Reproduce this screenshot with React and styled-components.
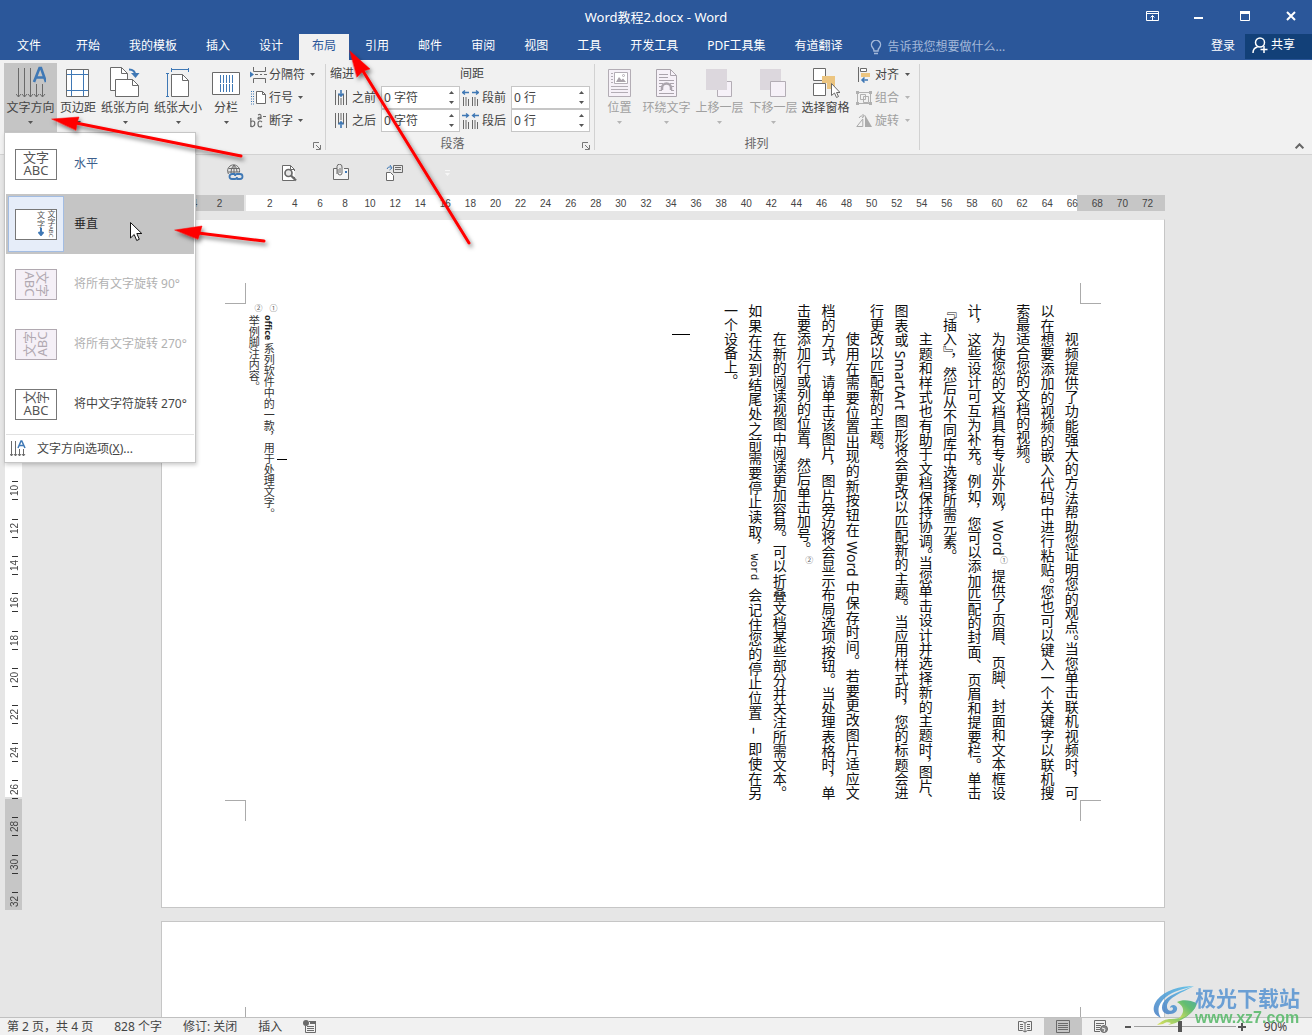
import React from "react";
import styled, { createGlobalStyle, css } from "styled-components";

const Global = createGlobalStyle`
  * { box-sizing: border-box; }
  body { margin: 0; background: #e6e6e6; }
  body, button, input { font-family: "Noto Sans", "Noto Sans CJK SC", sans-serif; font-size: 12px; line-height: 16px; color: #444; }
  button { border: 0; padding: 0; background: none; cursor: default; }
  svg { display: block; flex: none; }
`;

const Shell = styled.div`
  position: relative;
  display: flex;
  flex-direction: column;
  height: 100vh;
  min-height: 600px;
  overflow: hidden;
`;

/* ---------- title bar and tabs ---------- */
const TitleBar = styled.header`
  display: grid;
  grid-template-columns: 1fr auto 1fr;
  align-items: center;
  height: 34px;
  flex: none;
  background: #2b579a;
  color: #fff;
`;
const Title = styled.h1`
  margin: 0;
  grid-column: 2;
  font-size: 13px;
  font-weight: 400;
`;
const WindowButtons = styled.div`
  display: flex;
  justify-content: flex-end;
  padding-bottom: 2px;
`;
const WindowButton = styled.button`
  display: flex;
  align-items: center;
  justify-content: center;
  width: 46px;
  height: 32px;
  padding-left: 3px;
  color: #fff;
`;
const TabBar = styled.nav`
  display: flex;
  gap: 3px;
  height: 26px;
  flex: none;
  background: #2b579a;
`;
const Tab = styled.button`
  padding: ${(p) => (p.$file ? "0 19px 3px 17px" : "0 13px 3px")};
  color: ${(p) => (p.$active ? "#2b579a" : "#fff")};
  background: ${(p) => (p.$active ? "#f1f1f1" : "transparent")};
  white-space: nowrap;
`;
const TellMe = styled.label`
  display: flex;
  align-items: center;
  gap: 5px;
  padding-left: 12px;
  flex: 1;
`;
const TellMeInput = styled.input`
  flex: 1;
  min-width: 0;
  border: 0;
  padding: 0;
  background: transparent;
  &::placeholder { color: #a3b8d9; opacity: 1; }
`;
const SignIn = styled.button`
  color: #fff;
  padding: 0 7px 3px;
`;
const Share = styled.button`
  display: flex;
  align-items: center;
  gap: 3px;
  height: 25px;
  padding: 0 17px 3px 7px;
  background: #124078;
  color: #fff;
`;

/* ---------- ribbon ---------- */
const Ribbon = styled.section`
  display: flex;
  height: 95px;
  flex: none;
  background: #f1f1f1;
  border-bottom: 1px solid #d2d2d2;
`;
const Group = styled.div`
  display: flex;
  flex-direction: column;
  width: ${(p) => p.$width}px;
  position: relative;
  &::after {
    content: "";
    position: absolute;
    right: 0;
    top: 4px;
    height: 86px;
    border-right: 1px solid #d2d2d2;
  }
`;
const GroupBody = styled.div`
  display: flex;
  height: 74px;
  padding: 3px 4px 0 ${(p) => p.$left || 4}px;
`;
const GroupFoot = styled.div`
  display: flex;
  align-items: center;
  height: 20px;
  padding-right: 2px;
  color: #666;
`;
const GroupName = styled.span`
  flex: 1;
  text-align: center;
`;
const Launcher = styled.button`
  width: 14px;
  height: 20px;
  padding-top: 4px;
  display: grid;
  place-items: center;
`;
const BigButton = styled.button`
  display: flex;
  flex-direction: column;
  align-items: center;
  flex: none;
  width: ${(p) => p.$width}px;
  height: 69px;
  padding-top: 2px;
  white-space: nowrap;
  background: ${(p) => (p.$pressed ? "#c5c5c5" : "transparent")};
  color: ${(p) => (p.disabled ? "#a0a0a0" : "#444")};
`;
const BigIcon = styled.span`
  display: grid;
  place-items: center;
  height: 35px;
`;
const BigCaret = styled.span`
  display: grid;
  place-items: center;
  height: 13px;
`;
const SmallColumn = styled.div`
  display: flex;
  flex-direction: column;
  padding-left: ${(p) => p.$left || 3}px;
`;
const SmallButton = styled.button`
  display: flex;
  align-items: center;
  gap: ${(p) => p.$gap || 2}px;
  height: 23px;
  white-space: nowrap;
  color: ${(p) => (p.disabled ? "#a0a0a0" : "#444")};
`;
const CaretBox = styled.span`
  padding-left: 3px;
`;
const FieldColumn = styled.fieldset`
  border: 0;
  margin: 0;
  padding: 0;
  width: 130px;
  flex: none;
`;
const FieldTitle = styled.legend`
  padding: 3px 0 4px;
  height: 23px;
`;
const Field = styled.div`
  display: flex;
  align-items: center;
  height: 23px;
`;
const FieldLabel = styled.label`
  display: flex;
  align-items: center;
  justify-content: flex-end;
  gap: ${(p) => p.$gap}px;
  width: 46px;
  margin-right: 5px;
`;
const SpinBox = styled.span`
  display: flex;
  width: 79px;
  height: 23px;
  border: 1px solid #c6c6c6;
  background: #fff;
`;
const SpinInput = styled.input`
  width: 62px;
  border: 0;
  padding: 0 2px;
  background: transparent;
`;
const SpinButtons = styled.span`
  display: flex;
  flex-direction: column;
  flex: 1;
`;
const SpinButton = styled.button`
  flex: 1;
  display: grid;
  place-items: center;
`;
const Collapse = styled.button`
  align-self: flex-end;
  margin-left: auto;
  padding: 5px 8px;
`;

/* ---------- quick access ---------- */
const QuickBar = styled.div`
  display: flex;
  align-items: center;
  height: 40px;
  flex: none;
  padding: 0 0 5px 209px;
`;
const QuickButton = styled.button`
  display: grid;
  place-items: center;
  width: 53px;
  height: 24px;
`;

/* ---------- document ---------- */
const Workspace = styled.main`
  display: flex;
  flex: 1;
  min-height: 0;
  overflow: hidden;
  padding: 0 8px 0 5px;
`;
const VRuler = styled.div`
  width: 17px;
  height: 690px;
  margin-top: 25px;
  padding-top: 103px;
  flex: none;
  overflow: hidden;
  background: linear-gradient(#c6c6c6 0 84px, #fff 84px 577px, #e0e0e0 577px 579px, #c6c6c6 579px);
`;
const VScale = styled.div`
  display: flex;
  flex-direction: column;
  height: 597px;
`;
const VCell = styled.span`
  flex: 1;
  display: flex;
  flex-direction: column;
  align-items: center;
  justify-content: center;
  gap: 2px;
  padding-left: 3px;
  &::before, &::after { content: ""; width: 6px; height: 1px; background: #333; }
`;
const VNumber = styled.span`
  writing-mode: vertical-rl;
  transform: rotate(180deg);
  font: 10px/12px "Liberation Sans", sans-serif;
  height: 13px;
  text-align: center;
`;
const Canvas = styled.div`
  flex: 1;
  display: flex;
  flex-direction: column;
  align-items: center;
`;
const HRuler = styled.div`
  display: flex;
  width: 1004px;
  height: 16px;
  flex: none;
  margin-bottom: 8px;
  padding: 0 5px 0 21px;
  background: linear-gradient(90deg, #c6c6c6 0 83px, #e6e6e6 83px 85px, #fff 85px 916px, #c6c6c6 916px);
`;
const HCell = styled.span`
  flex: 1 0 0;
  text-align: center;
  font: 10px/18px "Liberation Sans", sans-serif;
`;
const Page = styled.article`
  display: flex;
  flex-direction: column;
  width: 1004px;
  height: ${(p) => (p.$next ? "200px" : "689px")};
  flex: none;
  margin-bottom: 13px;
  padding: ${(p) => (p.$next ? "85px" : "63px")} 63px 0;
  background: #fff;
  border: 1px solid #c6c6c6;
  border-top-color: ${(p) => (p.$next ? "#c6c6c6" : "#e6e6e6")};
`;
const MarkRow = styled.div`
  display: flex;
  justify-content: space-between;
`;
const CropMark = styled.span`
  width: 21px;
  height: 21px;
  border: 0 solid #ababab;
  ${(p) => p.$sides.map((s) => `border-${s}-width: 1px;`).join("")}
`;
const PageText = styled.div`
  display: flex;
  height: 496px;
  padding: 0 20px;
  color: #111;
`;
const Notes = styled.aside`
  display: flex;
  flex-direction: row-reverse;
  width: 30px;
  margin-left: 2px;
`;
const NoteLine = styled.p`
  margin: 0;
  width: 15px;
  writing-mode: vertical-rl;
  font: 11px/15px "Noto Sans", "Noto Sans CJK SC", sans-serif;
  white-space: nowrap;
  color: #333;
`;
const NoteLatin = styled.b`
  font-size: 9px;
  color: #222;
`;
const Rule = styled.span`
  width: ${(p) => p.$width}px;
  height: 1px;
  margin-top: ${(p) => p.$top}px;
  margin-left: ${(p) => (p.$push ? "auto" : "0")};
  margin-right: ${(p) => (p.$push ? "30px" : "0")};
  background: #000;
`;
const Story = styled.div`
  display: flex;
  flex-direction: row-reverse;
  justify-content: space-between;
  width: 361px;
`;
const Line = styled.p`
  margin: 0;
  width: 20px;
  height: 496px;
  writing-mode: vertical-rl;
  font: 14px/20px "Noto Sans", "Noto Sans CJK SC", sans-serif;
  text-indent: ${(p) => (p.$indent ? "28px" : "0")};
  ${(p) => p.$full && css`text-align: justify; text-align-last: justify;`}
`;
const Tight = styled.span`
  font-feature-settings: "vhal";
`;
const RefMark = styled.sup`
  font-size: 8px;
  line-height: 8px;
  color: #666;
`;
const Mono = styled.span`
  font: 11px/20px "Liberation Mono", monospace;
`;

/* ---------- drop-down menu ---------- */
const Menu = styled.div`
  position: absolute;
  left: 4px;
  top: 132px;
  width: 192px;
  padding: 1px;
  background: #fff;
  border: 1px solid #c6c6c6;
  box-shadow: 1px 2px 4px rgba(0, 0, 0, 0.2);
`;
const MenuItem = styled.button`
  display: flex;
  align-items: center;
  gap: 10px;
  width: 100%;
  height: 60px;
  padding-left: 2px;
  text-align: left;
  white-space: nowrap;
  background: ${(p) => (p.$hover ? "#c5c5c5" : "transparent")};
  color: ${(p) => (p.disabled ? "#b1b1b1" : p.$hover ? "#262626" : p.$cool ? "#3d5f8c" : "#444")};
`;
const Swatch = styled.span`
  display: grid;
  place-items: center;
  width: 56px;
  height: 56px;
  border: 1px solid ${(p) => (p.$on ? "#a3bde3" : "transparent")};
  background: ${(p) => (p.$on ? "#e6edf9" : "transparent")};
`;
const Sample = styled.span`
  display: flex;
  align-items: center;
  justify-content: center;
  width: 42px;
  height: 31px;
  border: 1px solid ${(p) => (p.$off ? "#b1a9b1" : "#777")};
  background: ${(p) => (p.$off ? "#f5f0f7" : "#fff")};
  color: ${(p) => (p.$off ? "#b1a9b1" : "#555")};
  ${(p) => p.$end && css`justify-content: flex-end;`}
`;
const SampleText = styled.span`
  font-size: 13px;
  line-height: 13px;
  text-align: center;
  transform: rotate(${(p) => p.$turn || 0}deg);
`;
const Turned = styled.span`
  display: inline-block;
  transform: rotate(-90deg);
`;
const TinyColumn = styled.span`
  display: flex;
  flex-direction: column;
  align-items: center;
  width: 10px;
  height: 29px;
  font-size: 8px;
  line-height: 9px;
`;
const TinyText = styled.span`
  writing-mode: vertical-rl;
  font-size: 8px;
  line-height: 10px;
  height: 29px;
  small { font-size: 6px; }
`;
const MenuFoot = styled.button`
  display: flex;
  align-items: center;
  gap: 11px;
  width: 100%;
  height: 27px;
  padding: 1px 0 0 4px;
  border-top: 1px solid #e1e1e1;
`;

/* ---------- status bar ---------- */
const StatusBar = styled.footer`
  display: flex;
  align-items: center;
  height: 18px;
  flex: none;
  padding-left: 7px;
  background: #f1f1f1;
  border-top: 1px solid #c0c0c0;
`;
const StatusItem = styled.button`
  margin-right: 21px;
  white-space: nowrap;
`;
const MacroItem = styled(StatusItem)`
  margin-right: auto;
`;
const ViewButton = styled.button`
  display: grid;
  place-items: center;
  width: 38px;
  height: 17px;
  background: ${(p) => (p.$on ? "#c5c5c5" : "transparent")};
`;
const Zoom = styled.div`
  display: flex;
  align-items: center;
  margin-left: 3px;
`;
const ZoomStep = styled.button`
  width: 10px;
  height: 16px;
  display: grid;
  place-items: center;
`;
const ZoomSlider = styled.input`
  appearance: none;
  width: 102px;
  height: 12px;
  margin: 0 1px;
  background: linear-gradient(#a0a0a0, #a0a0a0) center / 100% 1px no-repeat;
  &::-webkit-slider-thumb {
    appearance: none;
    width: 4px;
    height: 11px;
    background: #555;
  }
`;
const ZoomValue = styled.button`
  width: 65px;
  text-align: center;
  padding-right: 8px;
`;

const Watermark = styled.div`
  position: absolute;
  right: 12px;
  bottom: 8px;
  display: flex;
  opacity: 0.88;
  pointer-events: none;
`;
const WatermarkText = styled.div`
  display: flex;
  flex-direction: column;
  margin-left: -3px;
`;
const BrandName = styled.span`
  font: 700 21px/24px "Noto Sans CJK SC", sans-serif;
  color: #5b96d2;
`;
const BrandSite = styled.span`
  font: 700 16px/18px "Liberation Sans", sans-serif;
  color: #58b96a;
`;
const Annotation = styled.svg`
  position: absolute;
  left: 0;
  top: 0;
  pointer-events: none;
`;

/* ---------- icons ---------- */
const G = "#6a6a6a";
const B = "#3f78b5";

const Caret = ({ off }) => (
  <svg width="5" height="3"><path d="M0 0h5L2.500 3z" fill={off ? "#b5b5b5" : "#555"} /></svg>
);
const DirectionIcon = () => (
  <svg width="30" height="34" fill="none" stroke={G}>
    <path d="M2.500 2v29M8.500 2v29M14.500 2v29M20.500 18v13M26.500 18v13" />
    <path d="M0 28l2.500 3 2.500-3M6 28l2.500 3 2.500-3M12 28l2.500 3 2.500-3M18 28l2.500 3 2.500-3M24 28l2.500 3 2.500-3" />
    <path d="M18 16l5.500-14h1.500l5 14M20 11.500h8" stroke={B} strokeWidth="2.600" />
  </svg>
);
const MarginsIcon = () => (
  <svg width="24" height="30" fill="none">
    <path d="M.5 1.500h22v27H.5z" fill="#fff" stroke={G} />
    <path d="M5.500 2v26M17.500 2v26M1 6.500h21M1 22.500h21" stroke={B} />
  </svg>
);
const OrientationIcon = () => (
  <svg width="30" height="32" fill="#fff" stroke={G}>
    <path d="M.5.500h11l6 6v17H.5z" /><path d="M11.500.500v6h6" fill="none" />
    <path d="M5.500 12.500h17l6 6v11h-23z" /><path d="M22.500 12.500v6h6" fill="none" />
    <path d="M19 2.500q6 0 6.500 6" fill="none" stroke={B} strokeWidth="2" />
    <path d="M21 6l4.500 5 4-5z" fill={B} stroke="none" />
  </svg>
);
const SizeIcon = () => (
  <svg width="24" height="32" fill="none">
    <path d="M5.500 7.500h11l6 6v16h-17z" fill="#fff" stroke={G} /><path d="M16.500 7.500v6h6" stroke={G} />
    <path d="M5 2.500h18M5.500 1v4M22.500 1v4M1.500 7v23M0 6.500h3M0 29.500h3" stroke={B} />
  </svg>
);
const ColumnsIcon = () => (
  <svg width="28" height="26" fill="none">
    <path d="M.5 2.500h27v22H.5z" fill="#fff" stroke={G} />
    <path d="M8.500 5v8M11.500 5v8M14.500 5v8M17.500 5v8M20.500 5v8M8.500 14v8M11.500 14v8M14.500 14v8M17.500 14v8M20.500 14v8" stroke={B} />
  </svg>
);
const BreaksIcon = () => (
  <svg width="17" height="16" fill="none" stroke={G}>
    <path d="M3.500 0v4.500h12V0M3.500 16v-4.500h12V16M5 7.500h3M10 7.500h2M14 7.500h3" />
    <path d="M0 4.500l4 3-4 3z" fill={B} stroke="none" />
  </svg>
);
const LineNumberIcon = () => (
  <svg width="17" height="16" fill="none" stroke={G}>
    <path d="M6.500 1.500h6l3 3v9h-9z" fill="#fff" /><path d="M12.500 1.500v3h3" />
    <path d="M1.500 1v14M3.500 1v14" stroke={B} strokeDasharray="1 1.500" />
  </svg>
);
const HyphenIcon = () => (
  <svg width="17" height="16" fill="none" stroke={G} strokeWidth="1.200">
    <path d="M.8 5v9M.8 10q0-2 2-2t2 2.500-2 3-2-2M12 9q-1-1-2-1-2 0-2 3t2 3q1 0 2-1M8 2q3-1.500 3 1v3M11 4q-3 0-3 1.500T11 5M13 3.500h3" />
  </svg>
);
const IndentIcon = ({ below }) => (
  <svg width="12" height="15" fill="none">
    <path d={below ? "M.5 0v15M3.500 0v11M8.500 0v11M11.500 0v15M6 0v7" : "M.5 0v15M3.500 4v11M8.500 4v11M11.500 0v15M6 8v7"} stroke={G} />
    {below
      ? <path d="M6 15V9M3.500 11.500L6 9l2.500 2.500" stroke={B} strokeWidth="1.600" />
      : <path d="M6 0v6M3.500 3.500L6 6l2.500-2.500" stroke={B} strokeWidth="1.600" />}
  </svg>
);
const SpacingIcon = ({ inward }) => (
  <svg width="17" height="16" fill="none">
    <path d="M1.500 7v9M4 7v9M6.500 9v7M10.500 7v9M13 7v9M15.500 9v7" stroke={G} />
    <path
      d={inward ? "M0 2.500h6M4 .5l2.500 2L4 4.500M17 2.500h-6M13 .5l-2.500 2 2.500 2" : "M7 2.500H1M3 .5l-2.500 2 2.500 2M10 2.500h6M14 .5l2.500 2-2.500 2"}
      stroke={B} strokeWidth="1.300"
    />
  </svg>
);
const PositionIcon = () => (
  <svg width="24" height="30" fill="none" stroke="#b3adb5">
    <path d="M.5 1.500h22v27H.5z" fill="#f6f1f8" />
    <path d="M6.500 4.500h13v11h-13z" fill="#fff" /><path d="M8 14l3-5 2.500 3 1.500-1.500 3 3.500z" fill="#aaa3ab" stroke="none" />
    <circle cx="15.500" cy="7.500" r="1" />
    <path d="M3 5.500h2M3 8.500h2M3 11.500h2M3 14.500h2M3 18.500h17M3 21.500h17M3 24.500h17" />
  </svg>
);
const WrapIcon = () => (
  <svg width="22" height="30" fill="none" stroke="#aaa4ac">
    <path d="M.5 1.500h14l6 6v21H.5z" fill="#f6f1f8" /><path d="M14.500 1.500v6h6" />
    <path d="M3 6.500h9M3 9.500h9M3 12.500h15M3 15.500h4M14 15.500h4M3 18.500h2M16 18.500h2M3 25.500h15M3 22.500h3M15 22.500h3" />
    <path d="M6 22v-2a4.500 4.500 0 0 1 9 0v2" strokeWidth="2.500" />
  </svg>
);
const ForwardIcon = () => (
  <svg width="27" height="30" fill="none" stroke="#b3adb5">
    <path d="M11.500 13.500h14v15h-14z" fill="#f6f1f8" /><path d="M0 1h21v21H0z" fill="#dcd7dd" stroke="none" />
  </svg>
);
const BackwardIcon = () => (
  <svg width="27" height="30" fill="none" stroke="#b3adb5">
    <path d="M0 1h21v21H0z" fill="#dcd7dd" stroke="none" /><path d="M10.500 13.500h15v15h-15z" fill="#f6f1f8" />
  </svg>
);
const PaneIcon = () => (
  <svg width="28" height="32" fill="#fff" stroke={G}>
    <path d="M10 9h13v13H15v-7h-5z" fill="#ecc580" stroke="none" />
    <path d="M1.500 1.500h12v12h-12zM1.500 16.500h12v12h-12z" />
    <path d="M10 9h13v13H15v-6h-5z" fill="#ecc580" stroke="none" />
    <path d="M19.500 16.500v12l3-2.500 2 4.500 2-1-2-4h3.500z" />
  </svg>
);
const AlignIcon = () => (
  <svg width="16" height="16" fill="none" stroke={G}>
    <path d="M2.500 0v15" /><path d="M4.500 1.500h6v3h-6z" fill="#fff" />
    <path d="M5 6h9v4H5z" fill="#ecc580" stroke="none" /><path d="M12 13H6M8.500 10.500L6 13l2.500 2.500" stroke={B} strokeWidth="1.500" />
  </svg>
);
const GroupIcon = () => (
  <svg width="16" height="16" fill="none" stroke="#aaa">
    <path d="M4.500 4.500h5v5h-5zM7.500 6.500h5v6h-5zM3 2.500h10M3 13.500h10M1.500 4v8M14.500 4v8" strokeOpacity="0.9" />
    <path d="M0 1h3v3H0zM13 1h3v3h-3zM0 12h3v3H0zM13 12h3v3h-3z" fill="#b0b0b0" stroke="none" />
  </svg>
);
const RotateIcon = () => (
  <svg width="16" height="16" fill="none" stroke="#aaa">
    <path d="M.8 13.500h6V6zM3 5q1-3 5-2M6.500 1L8.500 3 6 5" /><path d="M9 2v12h7z" fill="#aaa" stroke="none" />
  </svg>
);
const LauncherIcon = () => (
  <svg width="8" height="8" fill="none" stroke="#777"><path d="M.5 6V.5H6M3 3l4 4M7.500 3v4.500H3" /></svg>
);
const CursorIcon = ({ x, y }) => (
  <g transform={`translate(${x} ${y})`}>
    <path d="M.5.500v15.500l3.700-3.500 2.500 6 2.600-1.200L6.800 11.500h5z" fill="#fff" stroke="#111" />
  </g>
);
const LinkIcon = () => (
  <svg width="18" height="18" fill="none" stroke={G}>
    <path d="M1.500 10A6 6 0 1 1 12.500 8M7 1Q3.500 4 4 9M7 1q3.500 3 3 7M1.500 4.500h11M1 8h12M7 1v8" />
    <path d="M8 10H5a2.500 2.500 0 0 0 0 5h3q2 0 2-2M10 15h3a2.500 2.500 0 0 0 0-5h-3q-2 0-2 2" stroke={B} strokeWidth="1.800" />
  </svg>
);
const PreviewIcon = () => (
  <svg width="16" height="18" fill="none" stroke={G}>
    <path d="M13.500 13v3.500H1.500v-15h8l4 4V7" fill="#fff" /><path d="M9.500 1.500v4h4" />
    <circle cx="7.500" cy="9" r="3.500" strokeWidth="1.700" fill="#e6e6e6" /><path d="M10 11.500l5 5" strokeWidth="2.300" />
  </svg>
);
const MailIcon = () => (
  <svg width="17" height="18" fill="none" stroke={G}>
    <path d="M4 4.500H.5v11h15v-11H11" fill="#f5f5f5" /><path d="M5 5v4a2 2 0 0 0 4 0V3a2.500 2.500 0 0 0-5-.5V10M7 4v5" />
    <path d="M12 7h2v2h-2z" fill={B} stroke="none" />
  </svg>
);
const MergeIcon = () => (
  <svg width="17" height="18" fill="none" stroke={G}>
    <path d="M.5 8.500h4l3 3v5h-7z" fill="#fff" /><path d="M7.500 1.500h9v7h-9zM9 3.500h6M9 5.500h6" />
    <path d="M1 5q1-3 4-2M3.500 6L6 4 4 1" stroke={B} />
  </svg>
);

/* ---------- data ---------- */
const TABS = ["开始", "我的模板", "插入", "设计", "布局", "引用", "邮件", "审阅", "视图", "工具", "开发工具", "PDF工具集", "有道翻译"];
const H_NUMBERS = [4, 2, "", ...Array.from({ length: 36 }, (_, i) => (i + 1) * 2)];
const V_NUMBERS = Array.from({ length: 16 }, (_, i) => (i + 1) * 2);
const STORY = [
  { indent: true, full: true, text: <>视频提供了功能强大的方法帮助您证明您的观点<Tight>。</Tight>当您单击联机视频时，可</> },
  { full: true, text: <>以在想要添加的视频的嵌入代码中进行粘贴<Tight>。</Tight>您也可以键入一个关键字以联机搜</> },
  { text: "索最适合您的文档的视频。" },
  { indent: true, full: true, text: <>为使您的文档具有专业外观，Word<RefMark>①</RefMark> 提供了页眉、页脚、封面和文本框设</> },
  { full: true, text: "计，这些设计可互为补充。例如，您可以添加匹配的封面、页眉和提要栏。单击" },
  { text: "『插入』，然后从不同库中选择所需元素。" },
  { indent: true, full: true, text: <>主题和样式也有助于文档保持协调<Tight>。</Tight>当您单击设计并选择新的主题时<Tight>，</Tight>图片<Tight>、</Tight></> },
  { full: true, text: "图表或 SmartArt 图形将会更改以匹配新的主题。当应用样式时，您的标题会进" },
  { text: "行更改以匹配新的主题。" },
  { indent: true, full: true, text: "使用在需要位置出现的新按钮在 Word 中保存时间。若要更改图片适应文" },
  { full: true, text: "档的方式，请单击该图片，图片旁边将会显示布局选项按钮。当处理表格时，单" },
  { text: <>击要添加行或列的位置，然后单击加号。<RefMark>②</RefMark></> },
  { indent: true, full: true, text: "在新的阅读视图中阅读更加容易。可以折叠文档某些部分并关注所需文本。" },
  { full: true, text: <>如果在达到结尾处之前需要停止读取，<Mono>Word</Mono>&ensp;会记住您的停止位置&ensp;–&ensp;即使在另</> },
  { text: "一个设备上。" },
];

const Big = ({ icon, label, caret = true, ...rest }) => (
  <BigButton {...rest}>
    <BigIcon>{icon}</BigIcon>
    {label}
    <BigCaret>{caret && <Caret off={rest.disabled} />}</BigCaret>
  </BigButton>
);
const Small = ({ icon, label, ...rest }) => (
  <SmallButton {...rest}>
    {icon}{label}<CaretBox><Caret off={rest.disabled} /></CaretBox>
  </SmallButton>
);
const Spin = ({ id, icon, label, value, gap }) => (
  <Field>
    <FieldLabel htmlFor={id} $gap={gap}>{icon}{label}</FieldLabel>
    <SpinBox>
      <SpinInput id={id} defaultValue={value} />
      <SpinButtons>
        <SpinButton aria-label="增加"><svg width="5" height="3"><path d="M0 3h5L2.500 0z" fill="#555" /></svg></SpinButton>
        <SpinButton aria-label="减少"><Caret /></SpinButton>
      </SpinButtons>
    </SpinBox>
  </Field>
);

export default function App() {
  return (
    <Shell>
      <Global />
      <TitleBar>
        <Title>Word教程2.docx - Word</Title>
        <WindowButtons>
          <WindowButton aria-label="功能区显示选项">
            <svg width="13" height="10" fill="none" stroke="#fff"><path d="M.5.500h12v9H.5zM1 2.500h11M6.500 9V4.500M4.500 6.500l2-2 2 2" /></svg>
          </WindowButton>
          <WindowButton aria-label="最小化"><svg width="9" height="10"><path d="M0 6h9v2H0z" fill="#fff" /></svg></WindowButton>
          <WindowButton aria-label="最大化"><svg width="10" height="10"><path d="M.5.500h9v9h-9z" fill="none" stroke="#fff" /><path d="M0 0h10v3H0z" fill="#fff" /></svg></WindowButton>
          <WindowButton aria-label="关闭"><svg width="10" height="10"><path d="M1 1l8 8M9 1L1 9" stroke="#fff" strokeWidth="2" /></svg></WindowButton>
        </WindowButtons>
      </TitleBar>
      <TabBar>
        <Tab $file>文件</Tab>
        {TABS.map((t) => <Tab key={t} $active={t === "布局"}>{t}</Tab>)}
        <TellMe>
          <svg width="12" height="15" fill="none" stroke="#a3b8d9" strokeWidth="1.400"><path d="M4 11Q4 9 2.500 7.500a4.500 4.500 0 1 1 7 0Q8 9 8 11zM4 13.500h4" /></svg>
          <TellMeInput aria-label="操作说明搜索" placeholder="告诉我您想要做什么..." />
        </TellMe>
        <SignIn>登录</SignIn>
        <Share>
          <svg width="16" height="17" fill="none" stroke="#fff" strokeWidth="1.500"><circle cx="8" cy="5.500" r="4.500" /><path d="M1 16q0-5 4.500-6M12 9v7M8.500 12.500h7" /></svg>
          共享
        </Share>
      </TabBar>

      <Ribbon>
        <Group $width={326}>
          <GroupBody>
            <Big $width={53} $pressed icon={<DirectionIcon />} label="文字方向" />
            <Big $width={42} icon={<MarginsIcon />} label="页边距" />
            <Big $width={52} icon={<OrientationIcon />} label="纸张方向" />
            <Big $width={54} icon={<SizeIcon />} label="纸张大小" />
            <Big $width={42} icon={<ColumnsIcon />} label="分栏" />
            <SmallColumn>
              <Small icon={<BreaksIcon />} label="分隔符" />
              <Small icon={<LineNumberIcon />} label="行号" />
              <Small icon={<HyphenIcon />} label="断字" />
            </SmallColumn>
          </GroupBody>
          <GroupFoot><GroupName /><Launcher aria-label="页面设置"><LauncherIcon /></Launcher></GroupFoot>
        </Group>
        <Group $width={269}>
          <GroupBody>
            <FieldColumn>
              <FieldTitle>缩进</FieldTitle>
              <Spin id="indent-before" gap={5} icon={<IndentIcon />} label="之前" value="0 字符" />
              <Spin id="indent-after" gap={5} icon={<IndentIcon below />} label="之后" value="0 字符" />
            </FieldColumn>
            <FieldColumn>
              <FieldTitle>间距</FieldTitle>
              <Spin id="space-before" gap={3} icon={<SpacingIcon />} label="段前" value="0 行" />
              <Spin id="space-after" gap={3} icon={<SpacingIcon inward />} label="段后" value="0 行" />
            </FieldColumn>
          </GroupBody>
          <GroupFoot><GroupName>段落</GroupName><Launcher aria-label="段落设置"><LauncherIcon /></Launcher></GroupFoot>
        </Group>
        <Group $width={325}>
          <GroupBody $left={2}>
            <Big $width={45} disabled icon={<PositionIcon />} label="位置" />
            <Big $width={49} disabled icon={<WrapIcon />} label="环绕文字" />
            <Big $width={57} disabled icon={<ForwardIcon />} label="上移一层" />
            <Big $width={51} disabled icon={<BackwardIcon />} label="下移一层" />
            <Big $width={53} icon={<PaneIcon />} label="选择窗格" caret={false} />
            <SmallColumn $left={4}>
              <Small $gap={3} icon={<AlignIcon />} label="对齐" />
              <Small $gap={3} disabled icon={<GroupIcon />} label="组合" />
              <Small $gap={3} disabled icon={<RotateIcon />} label="旋转" />
            </SmallColumn>
          </GroupBody>
          <GroupFoot><GroupName>排列</GroupName></GroupFoot>
        </Group>
        <Collapse aria-label="折叠功能区">
          <svg width="9" height="6" fill="none" stroke="#666" strokeWidth="2"><path d="M.7 5.300l3.800-4 3.800 4" /></svg>
        </Collapse>
      </Ribbon>

      <QuickBar>
        <QuickButton aria-label="超链接"><LinkIcon /></QuickButton>
        <QuickButton aria-label="打印预览"><PreviewIcon /></QuickButton>
        <QuickButton aria-label="电子邮件"><MailIcon /></QuickButton>
        <QuickButton aria-label="邮件合并"><MergeIcon /></QuickButton>
        <QuickButton aria-label="自定义快速访问工具栏"><svg width="5" height="6"><path d="M0 0h5v1H0zM0 3h5L2.500 6z" fill="#f7f7f7" /></svg></QuickButton>
      </QuickBar>

      <Workspace>
        <VRuler><VScale>{V_NUMBERS.map((n) => <VCell key={n}><VNumber>{n}</VNumber></VCell>)}</VScale></VRuler>
        <Canvas>
          <HRuler>{H_NUMBERS.map((n, i) => <HCell key={i}>{n}</HCell>)}</HRuler>
          <Page>
            <MarkRow><CropMark $sides={["right", "bottom"]} /><CropMark $sides={["left", "bottom"]} /></MarkRow>
            <PageText>
              <Notes>
                <NoteLine><RefMark>①</RefMark> <NoteLatin>office</NoteLatin> 系列软件中的一款，用于处理文字。</NoteLine>
                <NoteLine><RefMark>②</RefMark> 举例脚注内容。</NoteLine>
              </Notes>
              <Rule $width={10} $top={155} />
              <Rule $width={18} $top={30} $push />
              <Story>
                {STORY.map((l, i) => <Line key={i} $indent={l.indent} $full={l.full}>{l.text}</Line>)}
              </Story>
            </PageText>
            <MarkRow><CropMark $sides={["right", "top"]} /><CropMark $sides={["left", "top"]} /></MarkRow>
          </Page>
          <Page $next>
            <MarkRow><CropMark $sides={["right", "bottom"]} /><CropMark $sides={["left", "bottom"]} /></MarkRow>
          </Page>
        </Canvas>
      </Workspace>

      <StatusBar>
        <StatusItem>第 2 页，共 4 页</StatusItem>
        <StatusItem>828 个字</StatusItem>
        <StatusItem>修订: 关闭</StatusItem>
        <StatusItem>插入</StatusItem>
        <MacroItem aria-label="宏录制">
          <svg width="14" height="13"><path d="M2.500 6v6.500h10v-11H6M4 6.500h7M4 8.500h7M4 10.500h7" fill="none" stroke={G} /><circle cx="3" cy="3" r="3" fill={G} /><path d="M7 1h6v3H7z" fill={G} /></svg>
        </MacroItem>
        <ViewButton aria-label="阅读视图">
          <svg width="14" height="13" fill="none" stroke={G}><path d="M.5 1.500h4L7 3l2.500-1.500h4v9h-4L7 12l-2.500-1.500h-4zM7 3v9M2 4.500h3M2 6.500h3M2 8.500h3M9 4.500h3M9 6.500h3M9 8.500h3" /></svg>
        </ViewButton>
        <ViewButton $on aria-label="页面视图">
          <svg width="14" height="13" fill="none" stroke={G}><path d="M.5.500h13v12H.5zM2 3.500h10M2 5.500h10M2 7.500h10M2 9.500h10" /></svg>
        </ViewButton>
        <ViewButton aria-label="Web 版式视图">
          <svg width="14" height="13" fill="none" stroke={G}><path d="M6 11.500H.5V.5h11V5M2 3.500h8M2 5.500h5M2 7.500h4M2 9.500h4" /><circle cx="10" cy="9" r="3.500" fill="#888" /><path d="M8 8l3 1-1 3" stroke="#eee" /></svg>
        </ViewButton>
        <Zoom>
          <ZoomStep aria-label="缩小"><svg width="6" height="2"><path d="M0 0h6v2H0z" fill="#555" /></svg></ZoomStep>
          <ZoomSlider type="range" min="0" max="100" defaultValue="45" aria-label="显示比例" />
          <ZoomStep aria-label="放大"><svg width="8" height="8"><path d="M0 3h8v2H0zM3 0h2v8H3z" fill="#555" /></svg></ZoomStep>
          <ZoomValue>90%</ZoomValue>
        </Zoom>
      </StatusBar>

      <Menu role="menu">
        <MenuItem role="menuitem" $cool>
          <Swatch><Sample><SampleText>文字<br />ABC</SampleText></Sample></Swatch>水平
        </MenuItem>
        <MenuItem role="menuitem" $hover>
          <Swatch $on>
            <Sample $end>
              <TinyColumn>文<br />字<svg width="6" height="8" fill="none" stroke={B} strokeWidth="2"><path d="M3 0v7M.5 4L3 7l2.500-3" /></svg></TinyColumn>
              <TinyText>文字<small>ABC</small></TinyText>
            </Sample>
          </Swatch>垂直
        </MenuItem>
        <MenuItem role="menuitem" disabled>
          <Swatch><Sample $off><SampleText $turn={90}>文字<br />ABC</SampleText></Sample></Swatch>将所有文字旋转 90°
        </MenuItem>
        <MenuItem role="menuitem" disabled>
          <Swatch><Sample $off><SampleText $turn={-90}>文字<br />ABC</SampleText></Sample></Swatch>将所有文字旋转 270°
        </MenuItem>
        <MenuItem role="menuitem">
          <Swatch><Sample><SampleText><Turned>文</Turned><Turned>字</Turned><br />ABC</SampleText></Sample></Swatch>将中文字符旋转 270°
        </MenuItem>
        <MenuFoot role="menuitem">
          <svg width="16" height="17" fill="none" stroke={G}>
            <path d="M1.500 1v15M5.500 1v15M9.500 9v7M13.500 9v7M0 14l1.500 2L3 14M4 14l1.500 2L7 14M8 14l1.500 2 1.500-2M12 14l1.500 2 1.500-2" />
            <path d="M8 8l3-7h.8L15 8M9 5.500h5" stroke={B} strokeWidth="1.500" />
          </svg>
          <span>文字方向选项(<u>X</u>)...</span>
        </MenuFoot>
      </Menu>

      <Watermark>
        <svg width="45" height="42">
          <defs>
            <linearGradient id="swoosh" x1="0" y1="1" x2="1" y2="0"><stop offset="0" stopColor="#4a7fc4" /><stop offset="1" stopColor="#56c0ea" /></linearGradient>
            <linearGradient id="leaf" x1="0" y1="1" x2="1" y2="0"><stop offset="0" stopColor="#d9e04a" /><stop offset="0.600" stopColor="#52b862" /><stop offset="1" stopColor="#3fa894" /></linearGradient>
          </defs>
          <path d="M41 1C27 1 12 5 4 15c-5 7-5 14 4 18C3 25 6 18 13 12 20 6 30 4 41 1z" fill="url(#swoosh)" />
          <path d="M41 1C28 6 14 10 10 18c-3 7 1 12 7 11 6 0 9-5 6-8-2-2-6-1-6 2 1-1 3-1 3 1-1 3-6 2-6-2 0-9 12-13 27-21z" fill="url(#swoosh)" />
          <path d="M44 18c-3 9-14 16-26 16-6 0-9 2-14 6l6-1c3-2 5-2 8-1l-3 2c6-1 10-3 13-5 8-4 14-10 16-17z" fill="url(#leaf)" />
          <path d="M24 17c6-3 13-2 20 1-2 8-9 14-19 16 6-5 8-12-1-17z" fill="url(#leaf)" />
        </svg>
        <WatermarkText><BrandName>极光下载站</BrandName><BrandSite>www.xz7.com</BrandSite></WatermarkText>
      </Watermark>

      <Annotation width="500" height="270">
        <defs>
          <filter id="shade" x="-20%" y="-20%" width="140%" height="150%"><feDropShadow dx="2" dy="3" stdDeviation="2" floodOpacity="0.5" /></filter>
        </defs>
        <g filter="url(#shade)" fill="#f00" stroke="#f00" strokeLinecap="round">
          <path d="M76 123l165 33M198 233l66 8M363 71l106 172" strokeWidth="3" fill="none" />
          <path d="M52 119l27-2-2 6-1 7zM175 230l27-4-2 7-2 6zM350 51l20 18-7 2-6 6z" strokeWidth="0.500" />
        </g>
        <CursorIcon x={130} y={222} />
      </Annotation>
    </Shell>
  );
}
